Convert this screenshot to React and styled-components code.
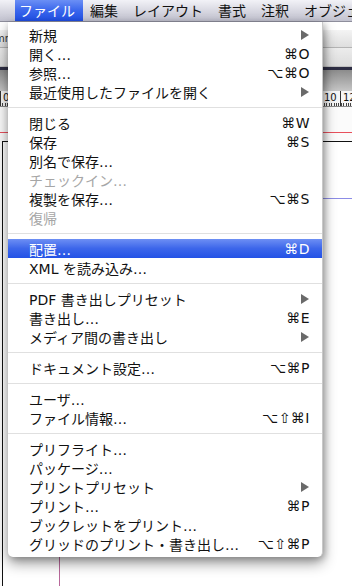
import React from "react"
import styled, { createGlobalStyle } from "styled-components"

const GlobalStyle = createGlobalStyle`
  html, body {
    margin: 0;
    padding: 0;
    background: #ffffff;
  }
  * {
    box-sizing: border-box;
  }
`

const Screen = styled.div`
  width: 352px;
  height: 586px;
  display: flex;
  flex-direction: column;
  overflow: hidden;
  font-family: "Noto Sans CJK JP", sans-serif;
`

//MENU BAR
const MenuBar = styled.div`
  height: 22px;
  flex: none;
  display: flex;
  align-items: stretch;
  padding-left: 15px;
  gap: 3px;
  background: linear-gradient(#f2f2f7, #d6d6e0 55%, #c2c2cf);
  border-bottom: 1px solid #8e8e9c;
`

const BarItem = styled.div`
  display: flex;
  align-items: center;
  padding: 0 8px 1px 4px;
  font-size: 14px;
  white-space: nowrap;
  color: ${(p) => (p.$open ? "#ffffff" : "#111111")};
  background: ${(p) =>
    p.$open ? "linear-gradient(#6b8ff5, #3a66ec 50%, #1f4fe6)" : "transparent"};
`

//WINDOW BEHIND
const Workspace = styled.div`
  position: relative;
  flex: 1;
  display: flex;
  flex-direction: column;
`

const TopStrip = styled.div`
  height: 8px;
  background: #ffffff;
`

const Toolbar = styled.div`
  height: 18px;
  display: flex;
  align-items: center;
  background: linear-gradient(#f4f4f4, #dedede);
  border-bottom: 1px solid #b4b4b4;
  font-family: "DejaVu Sans", sans-serif;
  font-size: 10px;
  color: #333;
`

const ToolbarLabel = styled.span`
  margin-left: -5px;
`

const Toolbar2 = styled.div`
  height: 19px;
  background: linear-gradient(#ececec, #dcdcdc);
  border-bottom: 1px solid #c0c0c0;
`

const DarkRule = styled.div`
  height: 3px;
  background: #2e2e44;
`

const PanelBar = styled.div`
  height: 21px;
  background: linear-gradient(#8c8c8c, #c6c6c6);
`

const Ruler = styled.div`
  height: 16px;
  display: flex;
  background-color: #f6f6f6;
  background-image: repeating-linear-gradient(
    to right,
    #444 0 1px,
    transparent 1px 2.4px
  );
  background-size: 100% 3px;
  background-repeat: no-repeat;
  background-position: 0 100%;
  border-bottom: 1px solid #888;
  font-family: "DejaVu Sans", sans-serif;
  font-size: 10px;
  color: #111;
`

const RulerMark = styled.div`
  width: ${(p) => p.$w}px;
  flex: none;
  border-left: 1px solid #333;
  padding: 1px 0 0 2px;
  line-height: 11px;
`

const Pasteboard = styled.div`
  flex: 1;
  display: flex;
  flex-direction: column;
  background: #fbfbfb;
`

const BleedGuide = styled.div`
  margin-top: 25px;
  height: 1px;
  background: #e8505c;
`

const Page = styled.div`
  flex: 1;
  margin: 8px 0 0 2px;
  border-top: 1px solid #111;
  border-left: 1px solid #111;
  background: #ffffff;
  display: flex;
`

const MarginGuide = styled.div`
  flex: 1;
  margin: 56px 0 0 56px;
  border-top: 1px solid #8c8ce6;
  border-left: 1px solid #b8689a;
`

//DROPDOWN
const Dropdown = styled.div`
  position: absolute;
  top: 0;
  left: 8px;
  width: 315px;
  padding: 3px 0 4px;
  background: #ffffff;
  border-radius: 0 0 5px 5px;
  border-right: 1px solid #c8c8c8;
  box-shadow: 0 6px 14px rgba(0, 0, 0, 0.42), 2px 2px 6px rgba(0, 0, 0, 0.2);
  font-family: "DejaVu Sans", "Noto Sans CJK JP", sans-serif;
`

const Item = styled.div`
  height: 19px;
  display: flex;
  align-items: center;
  justify-content: space-between;
  padding: 0 12px 0 21px;
  white-space: nowrap;
  color: ${(p) => (p.$active ? "#ffffff" : p.$disabled ? "#a6a6a6" : "#111111")};
  background: ${(p) =>
    p.$active ? "linear-gradient(#6d8ff4, #3c66ea 50%, #2352e6)" : "transparent"};
`

const Label = styled.span`
  font-family: "DejaVu Sans", "Noto Sans CJK JP", sans-serif;
  font-size: 14px;
`

const Shortcut = styled.span`
  font-family: "DejaVu Sans", sans-serif;
  font-size: 14px;
  letter-spacing: 0.5px;
`

const SubArrow = styled.span`
  width: 0;
  height: 0;
  margin-right: 1px;
  border-top: 5px solid transparent;
  border-bottom: 5px solid transparent;
  border-left: 8px solid #6a6a6a;
`

const Separator = styled.div`
  height: 12px;
  display: flex;
  align-items: center;

  &::after {
    content: "";
    flex: 1;
    height: 1px;
    background: #e0e0e0;
  }
`

const barItems = ["ファイル", "編集", "レイアウト", "書式", "注釈", "オブジェクト"]

const menu = [
  { label: "新規", sub: true },
  { label: "開く…", key: "⌘O" },
  { label: "参照…", key: "⌥⌘O" },
  { label: "最近使用したファイルを開く", sub: true },
  "sep",
  { label: "閉じる", key: "⌘W" },
  { label: "保存", key: "⌘S" },
  { label: "別名で保存…" },
  { label: "チェックイン…", disabled: true },
  { label: "複製を保存…", key: "⌥⌘S" },
  { label: "復帰", disabled: true },
  "sep",
  { label: "配置…", key: "⌘D", active: true },
  { label: "XML を読み込み…" },
  "sep",
  { label: "PDF 書き出しプリセット", sub: true },
  { label: "書き出し…", key: "⌘E" },
  { label: "メディア間の書き出し", sub: true },
  "sep",
  { label: "ドキュメント設定…", key: "⌥⌘P" },
  "sep",
  { label: "ユーザ…" },
  { label: "ファイル情報…", key: "⌥⇧⌘I" },
  "sep",
  { label: "プリフライト…" },
  { label: "パッケージ…" },
  { label: "プリントプリセット", sub: true },
  { label: "プリント…", key: "⌘P" },
  { label: "ブックレットをプリント…" },
  { label: "グリッドのプリント・書き出し…", key: "⌥⇧⌘P" },
]

const App = () => {
  return (
    <Screen>
      <GlobalStyle />
      <MenuBar>
        {barItems.map((name, i) => (
          <BarItem key={name} $open={i === 0}>
            {name}
          </BarItem>
        ))}
      </MenuBar>
      <Workspace>
        <TopStrip />
        <Toolbar>
          <ToolbarLabel>mm</ToolbarLabel>
        </Toolbar>
        <Toolbar2 />
        <DarkRule />
        <PanelBar />
        <Ruler>
          <RulerMark $w={321}>0</RulerMark>
          <RulerMark $w={19}>10</RulerMark>
          <RulerMark $w={20}>12</RulerMark>
        </Ruler>
        <Pasteboard>
          <BleedGuide />
          <Page>
            <MarginGuide />
          </Page>
        </Pasteboard>

        <Dropdown>
          {menu.map((item, i) =>
            item === "sep" ? (
              <Separator key={i} />
            ) : (
              <Item key={i} $active={item.active} $disabled={item.disabled}>
                <Label>{item.label}</Label>
                {item.key && <Shortcut>{item.key}</Shortcut>}
                {item.sub && <SubArrow />}
              </Item>
            )
          )}
        </Dropdown>
      </Workspace>
    </Screen>
  )
}

export default App
